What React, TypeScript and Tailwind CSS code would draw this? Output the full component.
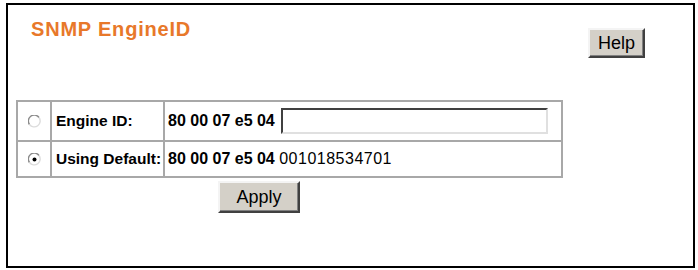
import React from 'react';

function Radio({ checked }: { checked?: boolean }) {
  return (
    <svg width="13" height="13" viewBox="0 0 13 13" className="block">
      <circle cx="6.5" cy="6.5" r="5.5" fill="#fff" />
      <path d="M11 2.5 A5.5 5.5 0 0 0 1.5 9.5" fill="none" stroke="#8a8a8a" strokeWidth="1.4" />
      <path d="M1.5 9.5 A5.5 5.5 0 0 0 11 2.5" fill="none" stroke="#dcdcdc" strokeWidth="1.4" />
      {checked && <circle cx="6.5" cy="6.5" r="2" fill="#000" />}
    </svg>
  );
}

function ClassicButton({ label, className }: { label: string; className?: string }) {
  return (
    <button
      className={`bg-[#d4d0c8] border-2 border-t-[#f4f4f4] border-l-[#f4f4f4] border-r-[#404040] border-b-[#404040] shadow-[inset_-1px_-1px_0_#808080] text-[18px] leading-none text-black ${className ?? ''}`}
    >
      {label}
    </button>
  );
}

export default function App() {
  return (
    <div
      className="w-[698px] h-[270px] bg-white pt-[3px] pl-[6px]"
      style={{ fontFamily: '"Liberation Sans", Arial, sans-serif' }}
    >
      <div className="w-[689px] h-[265px] border-2 border-black flex flex-col">
        {/* Header */}
        <div className="h-[95px] flex items-start justify-between">
          <h1 className="ml-[23px] mt-[13px] text-[20px] leading-[22px] font-bold tracking-[0.8px] text-[#e8782a]">
            SNMP EngineID
          </h1>
          <ClassicButton label="Help" className="mt-[23px] mr-[48px] w-[57px] h-[30px]" />
        </div>

        {/* Engine ID table */}
        <table className="ml-[8px] w-[547px] border-collapse border-2 border-[#a8a8a8] text-[16px] text-black">
          <tbody>
            <tr className="h-[40px]">
              <td className="w-[34px] border-2 border-[#a8a8a8]">
                <div className="flex justify-center">
                  <Radio />
                </div>
              </td>
              <td className="w-[113px] border-2 border-[#a8a8a8] pl-[4px] font-bold text-[15.5px]">Engine ID:</td>
              <td className="border-2 border-[#a8a8a8] pl-[3px]">
                <div className="flex items-center gap-[6px]">
                  <span className="font-bold">80 00 07 e5 04</span>
                  <input
                    type="text"
                    className="w-[267px] h-[26px] bg-white border-2 border-t-[#404040] border-l-[#404040] border-r-[#e0e0e0] border-b-[#e0e0e0] outline-none"
                  />
                </div>
              </td>
            </tr>
            <tr className="h-[36px]">
              <td className="border-2 border-[#a8a8a8]">
                <div className="flex justify-center">
                  <Radio checked />
                </div>
              </td>
              <td className="border-2 border-[#a8a8a8] pl-[4px] font-bold text-[15.5px] whitespace-nowrap">Using Default:</td>
              <td className="border-2 border-[#a8a8a8] pl-[3px]">
                <span className="font-bold">80 00 07 e5 04</span>{' '}
                <span className="tracking-[0.5px]">001018534701</span>
              </td>
            </tr>
          </tbody>
        </table>

        <ClassicButton label="Apply" className="mt-[3px] ml-[210px] w-[82px] h-[32px]" />
      </div>
    </div>
  );
}
